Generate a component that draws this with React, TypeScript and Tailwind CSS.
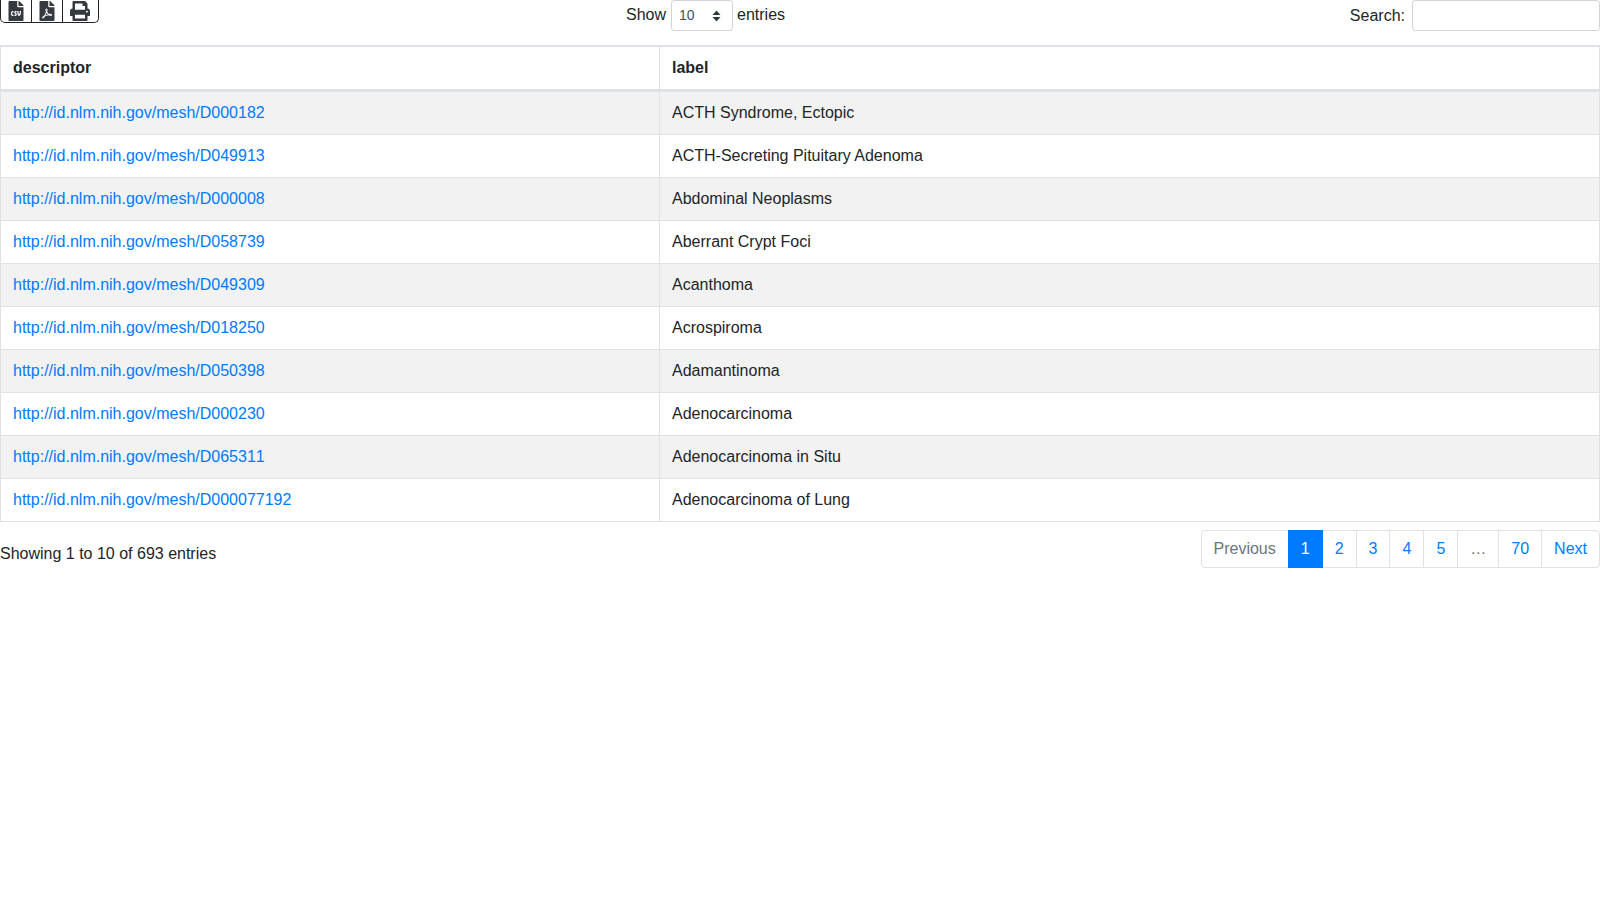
import React from "react";
import { FaFileCsv, FaFilePdf, FaPrint } from "react-icons/fa";

const rows = [
  ["D000182", "ACTH Syndrome, Ectopic"],
  ["D049913", "ACTH-Secreting Pituitary Adenoma"],
  ["D000008", "Abdominal Neoplasms"],
  ["D058739", "Aberrant Crypt Foci"],
  ["D049309", "Acanthoma"],
  ["D018250", "Acrospiroma"],
  ["D050398", "Adamantinoma"],
  ["D000230", "Adenocarcinoma"],
  ["D065311", "Adenocarcinoma in Situ"],
  ["D000077192", "Adenocarcinoma of Lung"],
];

const pageClass = "h-[38px] px-[12px] py-[6px] -ml-px border border-[#dee2e6] bg-white";

export default function App() {
  return (
    <div className="bg-white text-[#212529] text-[16px] leading-[24px] min-h-[900px]" style={{ fontFamily: '"Liberation Sans", Arial, sans-serif' }}>
      <div className="flex h-[45px] items-start overflow-hidden">
        <div className="w-[626px] shrink-0">
          <div className="inline-flex h-[23px] w-[99px] border border-[#212529] rounded-b-[5px] border-t-0 text-[#343a40] box-border">
            <span className="w-[31px] border-r border-[#212529] flex justify-center"><FaFileCsv className="text-[20px] mt-[1px]" /></span>
            <span className="w-[31px] border-r border-[#212529] flex justify-center"><FaFilePdf className="text-[20px] mt-[1px]" /></span>
            <span className="flex-1 flex justify-center pr-[1px]"><FaPrint className="text-[20px] mt-[1px]" /></span>
          </div>
        </div>
        <div className="flex items-center h-[31px]">
          <span className="mr-[5px] pb-[2px]">Show</span>
          <div className="w-[62px] h-[31px] border border-[#ced4da] rounded-[3.2px] flex items-center justify-between pl-[7px] pr-[11px] text-[14px] text-[#495057]">
            <span className="pb-[2px]">10</span>
            <svg width="9" height="12" viewBox="0 0 9 12" fill="#343a40"><path d="M4.5 0.5 8.5 5H0.5Z" /><path d="M4.5 11.5 0.5 7H8.5Z" /></svg>
          </div>
          <span className="ml-[4px] pb-[2px]">entries</span>
        </div>
        <div className="ml-auto flex items-center h-[31px]">
          <span className="mr-[7px]">Search:</span>
          <div className="w-[188px] h-[31px] border border-[#ced4da] rounded-[3.2px] bg-white" />
        </div>
      </div>
      <table className="w-full border-collapse table-fixed">
        <colgroup>
          <col className="w-[659px]" />
          <col />
        </colgroup>
        <thead>
          <tr>
            <th className="border border-[#dee2e6] border-b-[3px] border-t-2 text-left font-bold px-[12px] pt-[8.5px] pb-[9px]">descriptor</th>
            <th className="border border-[#dee2e6] border-b-[3px] border-t-2 text-left font-bold px-[12px] pt-[8.5px] pb-[9px]">label</th>
          </tr>
        </thead>
        <tbody>
          {rows.map(([id, label], i) => (
            <tr key={id} className={i % 2 === 0 ? "bg-[#f2f2f2]" : "bg-white"}>
              <td className="border border-[#dee2e6] px-[12px] py-[9px]">
                <a className="text-[#007bff] [font-kerning:none]">{"http://id.nlm.nih.gov/mesh/" + id}</a>
              </td>
              <td className="border border-[#dee2e6] px-[12px] py-[9px]">{label}</td>
            </tr>
          ))}
        </tbody>
      </table>
      <div className="flex justify-between items-start mt-[8px]">
        <div className="pt-[12px]">Showing 1 to 10 of 693 entries</div>
        <div className="flex">
          <span className={pageClass + " text-[#6c757d] rounded-l-[4px]"}>Previous</span>
          <span className="relative z-10 h-[38px] px-[12px] py-[6px] -ml-px border border-[#007bff] bg-[#007bff] text-white">1</span>
          <span className={pageClass + " text-[#007bff]"}>2</span>
          <span className={pageClass + " text-[#007bff]"}>3</span>
          <span className={pageClass + " text-[#007bff]"}>4</span>
          <span className={pageClass + " text-[#007bff]"}>5</span>
          <span className={pageClass + " text-[#6c757d]"}>…</span>
          <span className={pageClass + " text-[#007bff]"}>70</span>
          <span className={pageClass + " text-[#007bff] rounded-r-[4px]"}>Next</span>
        </div>
      </div>
    </div>
  );
}
